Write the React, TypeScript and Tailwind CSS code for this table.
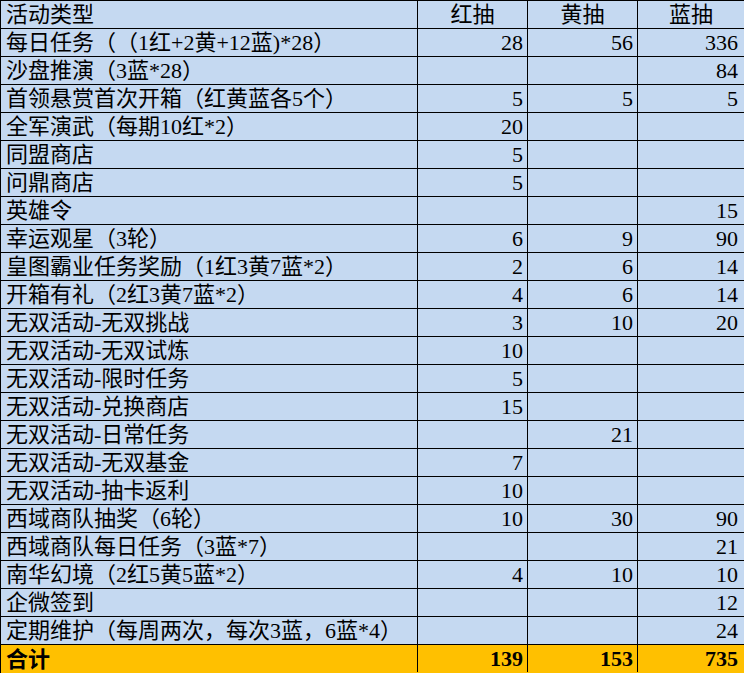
import React from "react";

type Row = { name: string; red?: number; yellow?: number; blue?: number };

const rows: Row[] = [
  { name: "每日任务（（1红+2黄+12蓝)*28）", red: 28, yellow: 56, blue: 336 },
  { name: "沙盘推演（3蓝*28）", blue: 84 },
  { name: "首领悬赏首次开箱（红黄蓝各5个）", red: 5, yellow: 5, blue: 5 },
  { name: "全军演武（每期10红*2）", red: 20 },
  { name: "同盟商店", red: 5 },
  { name: "问鼎商店", red: 5 },
  { name: "英雄令", blue: 15 },
  { name: "幸运观星（3轮）", red: 6, yellow: 9, blue: 90 },
  { name: "皇图霸业任务奖励（1红3黄7蓝*2）", red: 2, yellow: 6, blue: 14 },
  { name: "开箱有礼（2红3黄7蓝*2）", red: 4, yellow: 6, blue: 14 },
  { name: "无双活动-无双挑战", red: 3, yellow: 10, blue: 20 },
  { name: "无双活动-无双试炼", red: 10 },
  { name: "无双活动-限时任务", red: 5 },
  { name: "无双活动-兑换商店", red: 15 },
  { name: "无双活动-日常任务", yellow: 21 },
  { name: "无双活动-无双基金", red: 7 },
  { name: "无双活动-抽卡返利", red: 10 },
  { name: "西域商队抽奖（6轮）", red: 10, yellow: 30, blue: 90 },
  { name: "西域商队每日任务（3蓝*7）", blue: 21 },
  { name: "南华幻境（2红5黄5蓝*2）", red: 4, yellow: 10, blue: 10 },
  { name: "企微签到", blue: 12 },
  { name: "定期维护（每周两次，每次3蓝，6蓝*4）", blue: 24 },
];

const cell = "flex h-[28px] items-center border-t border-l border-black pt-[1px]";
const grid = "grid grid-cols-[417px_110px_110px_107px]";

function NumCell({ value, last, bold }: { value?: number; last?: boolean; bold?: boolean }) {
  return (
    <div className={`${cell} justify-end ${last ? "pr-[6px]" : "pr-[4px]"} ${bold ? "font-bold" : ""}`}>
      {value ?? ""}
    </div>
  );
}

export default function App() {
  return (
    <div
      className="w-[744px] bg-white text-[22px] leading-none text-black [text-spacing-trim:space-all]"
      style={{ fontFamily: '"Liberation Serif", "Noto Sans CJK SC", serif' }}
    >
      <div className={`${grid} bg-[#c5d9f1]`}>
        <div className={`${cell} pl-[5px]`}>活动类型</div>
        <div className={`${cell} justify-center`}>红抽</div>
        <div className={`${cell} justify-center`}>黄抽</div>
        <div className={`${cell} justify-center`}>蓝抽</div>
      </div>

      {rows.map((r) => (
        <div key={r.name} className={`${grid} bg-[#c5d9f1]`}>
          <div className={`${cell} whitespace-nowrap pl-[5px]`}>{r.name}</div>
          <NumCell value={r.red} />
          <NumCell value={r.yellow} />
          <NumCell value={r.blue} last />
        </div>
      ))}

      <div className={`${grid} bg-[#ffc000]`}>
        <div className={`${cell} h-[29px] pl-[5px] font-bold`}>合计</div>
        <NumCell value={139} bold />
        <NumCell value={153} bold />
        <NumCell value={735} last bold />
      </div>
    </div>
  );
}
